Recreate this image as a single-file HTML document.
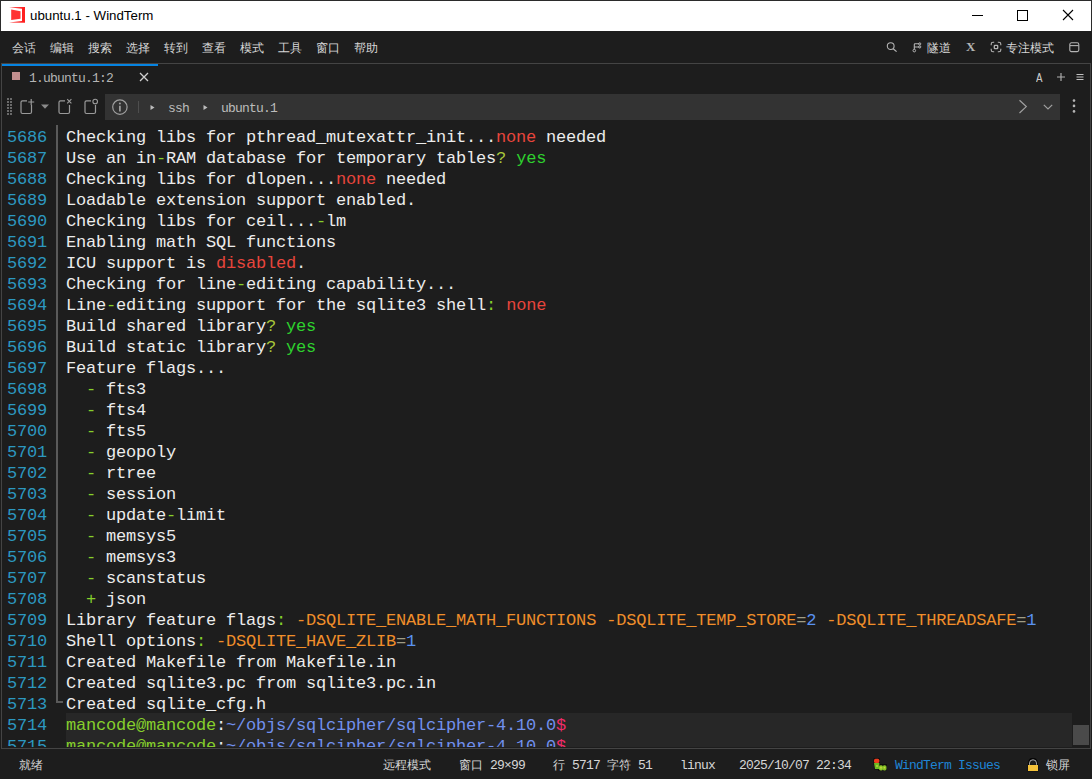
<!DOCTYPE html>
<html><head><meta charset="utf-8">
<style>
*{margin:0;padding:0;box-sizing:border-box}
html,body{width:1092px;height:779px;overflow:hidden;background:#1d1d1d;font-family:"Liberation Sans",sans-serif}
.abs{position:absolute}
#title{left:0;top:0;width:1092px;height:31px;background:#fff;border:1px solid #2b2b2b;border-bottom:none}
#title .t{left:29px;top:7px;font-size:13.3px;color:#000;white-space:nowrap}
#menu{left:0;top:31px;width:1092px;height:32px;background:#1d1d1d}
#menu span{position:absolute;top:9px;font-size:12px;color:#d6d6d6;white-space:nowrap}
#pane{left:1px;top:63px;width:1090px;height:686px;border:1px solid #444444;background:#1d1d1d}
#tabline{left:2px;top:64px;width:156px;height:2px;background:#0684e2}
#status{left:0;top:749px;width:1092px;height:30px;background:#1d1d1d}
#status span{position:absolute;top:8px;font-size:12px;color:#d6d6d6;white-space:nowrap}
.m,#status .m{font-family:"Liberation Mono",monospace;font-size:13px;letter-spacing:-0.8px}
#addr{left:105px;top:94px;width:955px;height:26px;background:#333333}
#term{left:0;top:125px;width:1088px;height:622px;overflow:hidden}
.hl{position:absolute;left:66px;top:588px;width:1006px;height:42px;background:#272727}
.sep{position:absolute;left:56px;top:0;width:2px;height:577px;background:#5a5a5a}
.tick{position:absolute;left:56px;top:576px;width:7px;height:2px;background:#5a5a5a}
.ln{position:absolute;left:0;width:1072px;height:21px;font-family:"Liberation Mono",monospace;font-size:17px;letter-spacing:-0.2px;line-height:21px;white-space:pre;color:#ececec}
.ln .n{position:absolute;left:7px;top:2px;color:#2c98c0}
.ln .c{position:absolute;left:66px;top:2px}
.r{color:#e8453c}.g{color:#86d02c}.y{color:#a8c83a}.gr{color:#2ed22e}.o{color:#f08e2a}.eq{color:#a09c84}.bl{color:#5a92f0}.pu{color:#7190ee}.p{color:#f02c6a}
#thumb{left:1073px;top:725px;width:16px;height:20px;background:#4a4a4a}
</style></head>
<body>
<div id="title" class="abs">
  <svg class="abs" style="left:8px;top:6px" width="17" height="17" viewBox="0 0 17 17"><path d="M0 0.2 L16 0 L16 15.8 L0 15.6 L13 14 L13 1.8 Z" fill="#ff2020"/><path d="M2.2 2.6 L11.5 4.2 L11.5 11.7 L2.2 13 Z" fill="#ff3232"/></svg>
  <div class="abs t">ubuntu.1 - WindTerm</div>
  <div class="abs" style="left:971px;top:14px;width:11px;height:1px;background:#000"></div>
  <div class="abs" style="left:1016px;top:9px;width:11px;height:11px;border:1px solid #000"></div>
  <svg class="abs" style="left:1061px;top:8px" width="12" height="12" viewBox="0 0 12 12"><path d="M1 1 L11 11 M11 1 L1 11" stroke="#000" stroke-width="1.1"/></svg>
</div>
<div id="menu" class="abs">
  <span style="left:12px">会话</span><span style="left:50px">编辑</span><span style="left:88px">搜索</span><span style="left:126px">选择</span><span style="left:164px">转到</span><span style="left:202px">查看</span><span style="left:240px">模式</span><span style="left:278px">工具</span><span style="left:316px">窗口</span><span style="left:354px">帮助</span>
  <svg class="abs" style="left:885px;top:10px" width="14" height="12" viewBox="0 0 14 12"><circle cx="5.7" cy="5.1" r="3.4" stroke="#b4b4b4" stroke-width="1.1" fill="none"/><path d="M8.2 7.7 L11.6 10.6" stroke="#b4b4b4" stroke-width="1.2"/></svg>
  <svg class="abs" style="left:911px;top:10px" width="12" height="12" viewBox="0 0 12 12"><circle cx="3.3" cy="9.6" r="1.3" stroke="#b4b4b4" stroke-width="1" fill="none"/><path d="M3.3 8.3 V3.5 Q3.3 2.8 4 2.8 H8.4 M3.3 6 H8.4" stroke="#b4b4b4" stroke-width="1.1" fill="none"/><circle cx="8.7" cy="2.9" r="1.1" stroke="#b4b4b4" stroke-width="1" fill="none"/><circle cx="8.7" cy="5.9" r="1.1" stroke="#b4b4b4" stroke-width="1" fill="none"/></svg>
  <span style="left:927px">隧道</span>
  <div class="abs" style="left:966px;top:8px;font-family:'Liberation Serif',serif;font-weight:bold;font-size:13px;color:#b4b4b4">X</div>
  <svg class="abs" style="left:990px;top:10px" width="12" height="12" viewBox="0 0 12 12"><path d="M1.2 4.2 V3 Q1.2 1.2 3 1.2 H4.2 M7.8 1.2 H9 Q10.8 1.2 10.8 3 V4.2 M10.8 7.8 V9 Q10.8 10.8 9 10.8 H7.8 M4.2 10.8 H3 Q1.2 10.8 1.2 9 V7.8" stroke="#b4b4b4" stroke-width="1.1" fill="none"/><rect x="4.3" y="4.3" width="3.4" height="3.4" rx="0.6" stroke="#b4b4b4" stroke-width="1.3" fill="none"/></svg>
  <span style="left:1006px">专注模式</span>
  <svg class="abs" style="left:1068px;top:10px" width="12" height="12" viewBox="0 0 12 12"><rect x="1.8" y="1.8" width="9" height="8.8" rx="1.6" stroke="#b4b4b4" stroke-width="1.1" fill="none"/><path d="M2 4.6 H10.6" stroke="#b4b4b4" stroke-width="1.1"/></svg>
</div>
<div id="pane" class="abs"></div>
<div id="tabline" class="abs"></div>
<div class="abs" style="left:12px;top:72px;width:8px;height:8px;background:#c28f8f"></div>
<div class="abs m" style="left:29px;top:71px;color:#b4b4b4">1.ubuntu.1:2</div>
<svg class="abs" style="left:139px;top:72px" width="10" height="10" viewBox="0 0 10 10"><path d="M1 1 L9 9 M9 1 L1 9" stroke="#d0d0d0" stroke-width="1.3"/></svg>
<div class="abs" style="left:1036px;top:71px;font-family:'Liberation Mono',monospace;font-size:13.5px;transform:scaleX(0.8);transform-origin:left;color:#c8c8c8">A</div>
<svg class="abs" style="left:1056px;top:72px" width="10" height="10" viewBox="0 0 10 10"><path d="M5 1 V9 M1 5 H9" stroke="#b0b0b0" stroke-width="1.15"/></svg>
<svg class="abs" style="left:1076px;top:73px" width="8" height="8" viewBox="0 0 8 8"><path d="M0.5 1.5 H7.5 M0.5 4 H7.5 M0.5 6.5 H7.5" stroke="#c0c0c0" stroke-width="1"/></svg>
<!-- toolbar -->
<svg class="abs" style="left:6px;top:97px" width="8" height="19" viewBox="0 0 8 19"><g fill="#6a6a6a"><rect x="1" y="1" width="2" height="2"/><rect x="4" y="1" width="2" height="2"/><rect x="1" y="4" width="2" height="2"/><rect x="4" y="4" width="2" height="2"/><rect x="1" y="7" width="2" height="2"/><rect x="4" y="7" width="2" height="2"/><rect x="1" y="10" width="2" height="2"/><rect x="4" y="10" width="2" height="2"/><rect x="1" y="13" width="2" height="2"/><rect x="4" y="13" width="2" height="2"/><rect x="1" y="16" width="2" height="2"/><rect x="4" y="16" width="2" height="2"/></g></svg>
<svg class="abs" style="left:19px;top:96px" width="18" height="20" viewBox="0 0 18 20"><path d="M8 4.8 H3.5 Q2 4.8 2 6.3 V16 Q2 17.5 3.5 17.5 H11 Q12.5 17.5 12.5 16 V9" stroke="#9a9a9a" stroke-width="1.2" fill="none"/><path d="M12.2 3 V9 M9.2 6 H15.2" stroke="#9a9a9a" stroke-width="1.2"/></svg>
<svg class="abs" style="left:40px;top:104px" width="10" height="6" viewBox="0 0 10 6"><path d="M1 0.5 H9 L5 4.8 Z" fill="#8a8a8a"/></svg>
<svg class="abs" style="left:57px;top:96px" width="18" height="20" viewBox="0 0 18 20"><path d="M8 4.8 H3.5 Q2 4.8 2 6.3 V16 Q2 17.5 3.5 17.5 H11 Q12.5 17.5 12.5 16 V9" stroke="#9a9a9a" stroke-width="1.2" fill="none"/><path d="M10.2 3.2 L14.4 7.4 M14.4 3.2 L10.2 7.4" stroke="#9a9a9a" stroke-width="1.1"/></svg>
<svg class="abs" style="left:83px;top:96px" width="18" height="20" viewBox="0 0 18 20"><path d="M8 4.8 H3.5 Q2 4.8 2 6.3 V16 Q2 17.5 3.5 17.5 H11 Q12.5 17.5 12.5 16 V9" stroke="#9a9a9a" stroke-width="1.2" fill="none"/><circle cx="12.2" cy="5.5" r="2.3" stroke="#9a9a9a" stroke-width="1.1" fill="none"/></svg>
<div id="addr" class="abs"></div>
<svg class="abs" style="left:111px;top:99px" width="18" height="17" viewBox="0 0 18 17"><circle cx="8.9" cy="8.1" r="7.2" stroke="#a0a0a0" stroke-width="1.2" fill="none"/><path d="M8.9 6.8 V12.4" stroke="#a0a0a0" stroke-width="1.7"/><circle cx="8.9" cy="4.4" r="1" fill="#a0a0a0"/></svg>
<div class="abs" style="left:138px;top:101px;width:1px;height:12px;background:#4e4e4e"></div>
<svg class="abs" style="left:150px;top:104px" width="5" height="7" viewBox="0 0 5 7"><path d="M0.5 1 L4.5 3.5 L0.5 6 Z" fill="#bdbdbd"/></svg>
<div class="abs m" style="left:168px;top:101px;color:#bcbcbc">ssh</div>
<svg class="abs" style="left:203px;top:104px" width="5" height="7" viewBox="0 0 5 7"><path d="M0.5 1 L4.5 3.5 L0.5 6 Z" fill="#bdbdbd"/></svg>
<div class="abs m" style="left:221px;top:101px;color:#bcbcbc">ubuntu.1</div>
<svg class="abs" style="left:1017px;top:99px" width="11" height="16" viewBox="0 0 11 16"><path d="M2.5 1.2 L9.3 7.6 L2.5 14" stroke="#a0a0a0" stroke-width="1.2" fill="none"/></svg>
<svg class="abs" style="left:1043px;top:104px" width="10" height="6" viewBox="0 0 10 6"><path d="M0.8 0.8 L5 5 L9.2 0.8" stroke="#a0a0a0" stroke-width="1.2" fill="none"/></svg>
<svg class="abs" style="left:1072px;top:99px" width="4" height="15" viewBox="0 0 4 15"><circle cx="2" cy="1.6" r="1.3" fill="#b4b4b4"/><circle cx="2" cy="6.9" r="1.3" fill="#b4b4b4"/><circle cx="2" cy="12.4" r="1.3" fill="#b4b4b4"/></svg>
<div id="term" class="abs">
<div class="hl"></div>
<div class="sep"></div><div class="tick"></div>
<div class="ln" style="top:0px"><span class="n">5686</span><span class="c">Checking libs for pthread_mutexattr_init...<span class="r">none</span> needed</span></div>
<div class="ln" style="top:21px"><span class="n">5687</span><span class="c">Use an in<span class="g">-</span>RAM database for temporary tables<span class="y">?</span> <span class="gr">yes</span></span></div>
<div class="ln" style="top:42px"><span class="n">5688</span><span class="c">Checking libs for dlopen...<span class="r">none</span> needed</span></div>
<div class="ln" style="top:63px"><span class="n">5689</span><span class="c">Loadable extension support enabled.</span></div>
<div class="ln" style="top:84px"><span class="n">5690</span><span class="c">Checking libs for ceil...<span class="g">-</span>lm</span></div>
<div class="ln" style="top:105px"><span class="n">5691</span><span class="c">Enabling math SQL functions</span></div>
<div class="ln" style="top:126px"><span class="n">5692</span><span class="c">ICU support is <span class="r">disabled</span>.</span></div>
<div class="ln" style="top:147px"><span class="n">5693</span><span class="c">Checking for line<span class="g">-</span>editing capability...</span></div>
<div class="ln" style="top:168px"><span class="n">5694</span><span class="c">Line<span class="g">-</span>editing support for the sqlite3 shell<span class="g">:</span> <span class="r">none</span></span></div>
<div class="ln" style="top:189px"><span class="n">5695</span><span class="c">Build shared library<span class="y">?</span> <span class="gr">yes</span></span></div>
<div class="ln" style="top:210px"><span class="n">5696</span><span class="c">Build static library<span class="y">?</span> <span class="gr">yes</span></span></div>
<div class="ln" style="top:231px"><span class="n">5697</span><span class="c">Feature flags...</span></div>
<div class="ln" style="top:252px"><span class="n">5698</span><span class="c">  <span class="g">-</span> fts3</span></div>
<div class="ln" style="top:273px"><span class="n">5699</span><span class="c">  <span class="g">-</span> fts4</span></div>
<div class="ln" style="top:294px"><span class="n">5700</span><span class="c">  <span class="g">-</span> fts5</span></div>
<div class="ln" style="top:315px"><span class="n">5701</span><span class="c">  <span class="g">-</span> geopoly</span></div>
<div class="ln" style="top:336px"><span class="n">5702</span><span class="c">  <span class="g">-</span> rtree</span></div>
<div class="ln" style="top:357px"><span class="n">5703</span><span class="c">  <span class="g">-</span> session</span></div>
<div class="ln" style="top:378px"><span class="n">5704</span><span class="c">  <span class="g">-</span> update<span class="g">-</span>limit</span></div>
<div class="ln" style="top:399px"><span class="n">5705</span><span class="c">  <span class="g">-</span> memsys5</span></div>
<div class="ln" style="top:420px"><span class="n">5706</span><span class="c">  <span class="g">-</span> memsys3</span></div>
<div class="ln" style="top:441px"><span class="n">5707</span><span class="c">  <span class="g">-</span> scanstatus</span></div>
<div class="ln" style="top:462px"><span class="n">5708</span><span class="c">  <span class="g">+</span> json</span></div>
<div class="ln" style="top:483px"><span class="n">5709</span><span class="c">Library feature flags<span class="g">:</span> <span class="o">-DSQLITE_ENABLE_MATH_FUNCTIONS</span> <span class="o">-DSQLITE_TEMP_STORE</span><span class="eq">=</span><span class="bl">2</span> <span class="o">-DSQLITE_THREADSAFE</span><span class="eq">=</span><span class="bl">1</span></span></div>
<div class="ln" style="top:504px"><span class="n">5710</span><span class="c">Shell options<span class="g">:</span> <span class="o">-DSQLITE_HAVE_ZLIB</span><span class="eq">=</span><span class="bl">1</span></span></div>
<div class="ln" style="top:525px"><span class="n">5711</span><span class="c">Created Makefile from Makefile.in</span></div>
<div class="ln" style="top:546px"><span class="n">5712</span><span class="c">Created sqlite3.pc from sqlite3.pc.in</span></div>
<div class="ln" style="top:567px"><span class="n">5713</span><span class="c">Created sqlite_cfg.h</span></div>
<div class="ln" style="top:588px"><span class="n">5714</span><span class="c"><span class="g">mancode@mancode</span>:<span class="pu">~/objs/sqlcipher/sqlcipher-4.10.0</span><span class="p">$</span></span></div>
<div class="ln" style="top:609px"><span class="n">5715</span><span class="c"><span class="g">mancode@mancode</span>:<span class="pu">~/objs/sqlcipher/sqlcipher-4.10.0</span><span class="p">$</span></span></div>
</div>
<div id="thumb" class="abs"></div>
<div id="status" class="abs">
  <span style="left:19px">就绪</span>
  <span style="left:383px">远程模式</span>
  <span style="left:459px">窗口</span><span class="m" style="top:9px;left:490px">29×99</span>
  <span style="left:553px">行</span><span class="m" style="top:9px;left:572px">5717</span>
  <span style="left:607px">字符</span><span class="m" style="top:9px;left:638px">51</span>
  <span class="m" style="top:9px;left:680px">linux</span>
  <span class="m" style="top:9px;left:739px">2025/10/07 22:34</span>
  <svg class="abs" style="left:872px;top:8px" width="16" height="15" viewBox="0 0 16 15"><path d="M1.5 1.3 H7.8 V7 H15 V13.3 H9 V14 H6 V12.6 H2.3 V8 H1.5 Z" fill="#0a0a0a" opacity="0.85"/><rect x="2" y="1.8" width="5.3" height="4.3" rx="1.5" fill="#ee3b1c"/><path d="M2 6 H7.3 V12 H3 Z" fill="#6cbc22"/><rect x="7" y="8.2" width="4" height="5.2" rx="1.6" fill="#8cc828"/><rect x="10.6" y="8.2" width="3.9" height="5.2" rx="1.6" fill="#82c024"/><circle cx="5" cy="9" r="1" fill="#b8d040"/><circle cx="9" cy="10.7" r="0.9" fill="#c8d840"/><circle cx="12.5" cy="10.7" r="0.9" fill="#c8d840"/></svg>
  <span class="m" style="top:9px;left:895px;color:#1f85d6">WindTerm Issues</span>
  <svg class="abs" style="left:1026px;top:9px" width="14" height="15" viewBox="0 0 14 15"><path d="M3.5 7.5 V4.8 Q3.5 1.2 7 1.2 Q10.5 1.2 10.5 4.8 V7.5" stroke="#050505" stroke-width="2.6" fill="none"/><path d="M3.6 7.2 V4.9 Q3.6 1.8 7 1.8 Q10.4 1.8 10.4 4.9 V7.2" stroke="#c4c4c4" stroke-width="0.9" fill="none"/><rect x="1.6" y="6.8" width="10.8" height="6.6" fill="#0a0a0a" opacity="0.8"/><rect x="2" y="7" width="10" height="6" fill="#f4c23a"/></svg>
  <span style="left:1046px">锁屏</span>
</div>
</body></html>
